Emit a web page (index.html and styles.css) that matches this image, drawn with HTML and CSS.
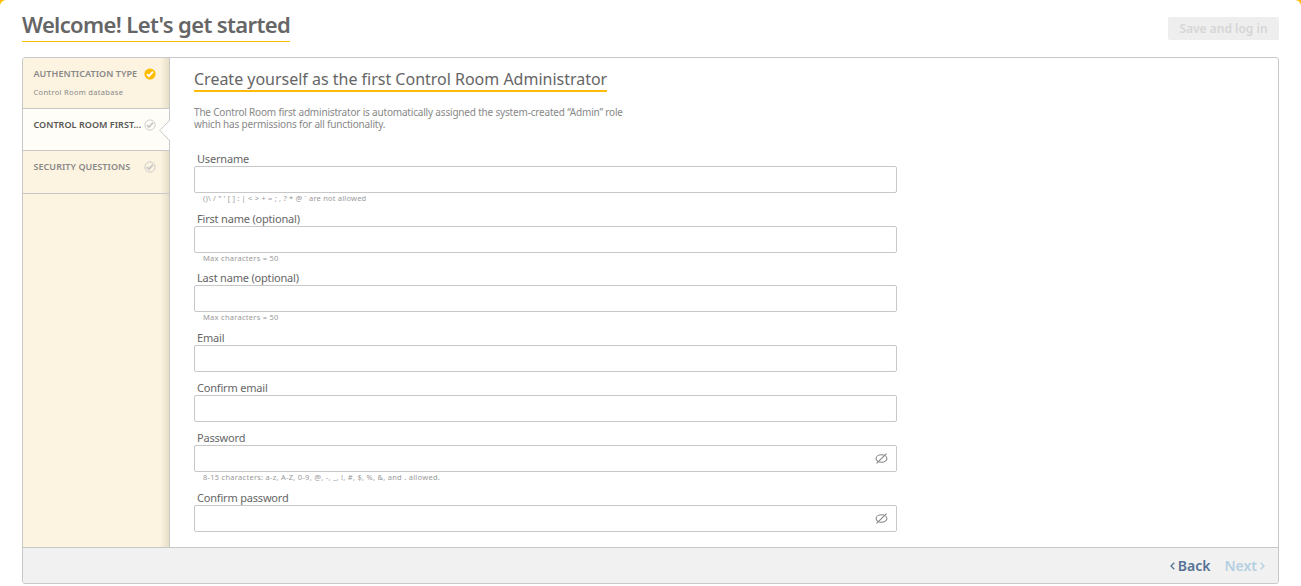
FILE: index.html
```html
<!DOCTYPE html>
<html lang="en">
<head>
<meta charset="utf-8">
<title>Control Room setup</title>
<link rel="stylesheet" href="styles.css">
</head>
<body>
<main class="page">
  <header class="header">
    <h1 class="title">Welcome! Let's get started</h1>
    <button class="save" disabled>Save and log in</button>
  </header>
  <section class="wizard">
    <div class="body">
      <nav class="steps">
        <div class="step step-auth">
          <div class="step-head"><span class="step-name">AUTHENTICATION TYPE</span>
            <svg class="check" viewBox="0 0 12 12"><circle cx="6" cy="6" r="5.6" fill="#ffbc03"/><path d="M3 6.1l2 2 4-4.4" fill="none" stroke="#fff" stroke-width="2"/></svg></div>
          <div class="step-detail">Control Room database</div>
        </div>
        <div class="step step-active">
          <div class="step-head"><span class="step-name">CONTROL ROOM FIRST...</span>
            <svg class="check" viewBox="0 0 12 12"><circle cx="6" cy="6" r="5.1" fill="none" stroke="#c8c8c8" stroke-width=".9"/><path d="M3 6.1l2 2 4-4.4" fill="none" stroke="#c8c8c8" stroke-width="1.8"/></svg></div>
          <svg class="notch" viewBox="0 0 11 21"><path d="M11 0L.7 10.5 11 21z" fill="#fff"/><path d="M11 0L.7 10.5 11 21" fill="none" stroke="#c8c8c8"/></svg>
        </div>
        <div class="step step-questions">
          <div class="step-head"><span class="step-name">SECURITY QUESTIONS</span>
            <svg class="check" viewBox="0 0 12 12"><circle cx="6" cy="6" r="5.1" fill="none" stroke="#c8c8c8" stroke-width=".9"/><path d="M3 6.1l2 2 4-4.4" fill="none" stroke="#c8c8c8" stroke-width="1.8"/></svg></div>
        </div>
      </nav>
      <div class="content">
        <h2 class="subtitle">Create yourself as the first Control Room Administrator</h2>
        <p class="intro">The Control Room first administrator is automatically assigned the system-created “Admin” role<br>which has permissions for all functionality.</p>
        <form class="form">
          <div class="field hinted"><label>Username</label><div class="input"></div><div class="hint hint-user">()\ / " ' [ ] : | &lt; &gt; + = ; , ? * @ ` are not allowed</div></div>
          <div class="field hinted"><label>First name (optional)</label><div class="input"></div><div class="hint">Max characters = 50</div></div>
          <div class="field hinted"><label>Last name (optional)</label><div class="input"></div><div class="hint">Max characters = 50</div></div>
          <div class="field"><label>Email</label><div class="input"></div></div>
          <div class="field"><label>Confirm email</label><div class="input"></div></div>
          <div class="field hinted"><label>Password</label><div class="input"><svg class="eye" viewBox="0 0 12 12"><ellipse cx="6" cy="6" rx="5" ry="3.4"/><path d="M1.4 10.6L10.6 1.4"/></svg></div><div class="hint">8-15 characters: a-z, A-Z, 0-9, @, -, _, !, #, $, %, &amp;, and . allowed.</div></div>
          <div class="field"><label>Confirm password</label><div class="input"><svg class="eye" viewBox="0 0 12 12"><ellipse cx="6" cy="6" rx="5" ry="3.4"/><path d="M1.4 10.6L10.6 1.4"/></svg></div></div>
        </form>
      </div>
    </div>
    <footer class="footer">
      <span class="nav-link back"><svg class="chevron" viewBox="0 0 5 8"><path d="M4.3 .8L1 4l3.3 3.2"/></svg>Back</span>
      <span class="nav-link next">Next<svg class="chevron" viewBox="0 0 5 8"><path d="M.7 .8L4 4 .7 7.2"/></svg></span>
    </footer>
  </section>
</main>
</body>
</html>
```
FILE: styles.css
```css
* { box-sizing: border-box; }
body { margin: 0; background: #ffbc03; font-family: "Noto Sans", sans-serif; color: #666; }
.page { height: 586px; overflow: hidden; padding: 0 22px; background: #fff; border-radius: 6px 6px 0 0; white-space: nowrap; }
.header { height: 57px; display: flex; justify-content: space-between; align-items: flex-start; }
.title { margin: 10px 0 0; width: 268px; height: 32px; border-bottom: 1px solid #ffbc03; font-size: 22px; line-height: 29px; font-weight: 600; letter-spacing: -.64px; }
.save { margin-top: 17px; width: 111px; height: 23px; padding: 0; border: 0; border-radius: 2px; background: #eee; color: #d6d6d6; font: 600 12px/23px "Noto Sans", sans-serif; }
.wizard { height: 527px; border: 1px solid #c8c8c8; border-radius: 3px; overflow: hidden; }
.body { height: 489px; display: flex; }
.steps { width: 147px; border-right: 1px solid #c8c8c8; background: linear-gradient(90deg, transparent 137px, rgba(120, 100, 60, .17) 147px), #fcf4e1; }
.step { position: relative; padding: 10px 10px 0 10.5px; border-bottom: 1px solid #c8c8c8; }
.step-auth { height: 51px; }
.step-active { height: 42px; background: #fffdf7; color: #555; }
.step-questions { height: 43px; }
.step-auth, .step-questions { color: #888; }
.step-head { height: 12px; display: flex; align-items: center; justify-content: space-between; width: 122px; }
.step-name { font-size: 9px; line-height: 12px; font-weight: 600; letter-spacing: .05px; }
.check { width: 12px; height: 12px; flex: none; }
.step-detail { margin-top: 7px; font-size: 7.5px; line-height: 10px; letter-spacing: .32px; }
.notch { position: absolute; right: -1px; top: 11px; width: 11px; height: 21px; }
.content { padding: 10px 0 0 24px; }
.subtitle { margin: 0; width: 413px; height: 24px; border-bottom: 2px solid #ffbc03; font-size: 16px; line-height: 22px; font-weight: 400; letter-spacing: -.01px; }
.intro { margin: 14px 0 0; font-size: 10px; line-height: 12px; letter-spacing: -.185px; color: #888; }
.form { padding-top: 21.9px; }
.field { height: 50px; }
.hinted { height: 59.75px; }
.field label { display: block; height: 14px; padding-left: 3px; font-size: 11px; line-height: 14px; letter-spacing: -.19px; }
.input { width: 703px; height: 27px; border: 1px solid #c8c8c8; border-radius: 2px; display: flex; align-items: center; justify-content: flex-end; padding-right: 8px; }
.hint { height: 11px; padding-left: 9px; font-size: 7.5px; line-height: 10px; letter-spacing: .27px; color: #999; }
.hint-user { letter-spacing: .2px; }
.eye { width: 13px; height: 13px; fill: none; stroke: #858585; stroke-width: 1; }
.footer { height: 37px; border-top: 1px solid #c8c8c8; background: #f1f1f1; display: flex; justify-content: flex-end; gap: 14px; padding: 0 13px 0 0; }
.nav-link { display: flex; align-items: center; gap: 3px; height: 35px; font-size: 14px; line-height: 19px; font-weight: 600; }
.back { color: #557194; }
.next { color: #b5cfe2; }
.chevron { width: 5px; height: 8px; fill: none; stroke: currentColor; stroke-width: 1.3; }
```
